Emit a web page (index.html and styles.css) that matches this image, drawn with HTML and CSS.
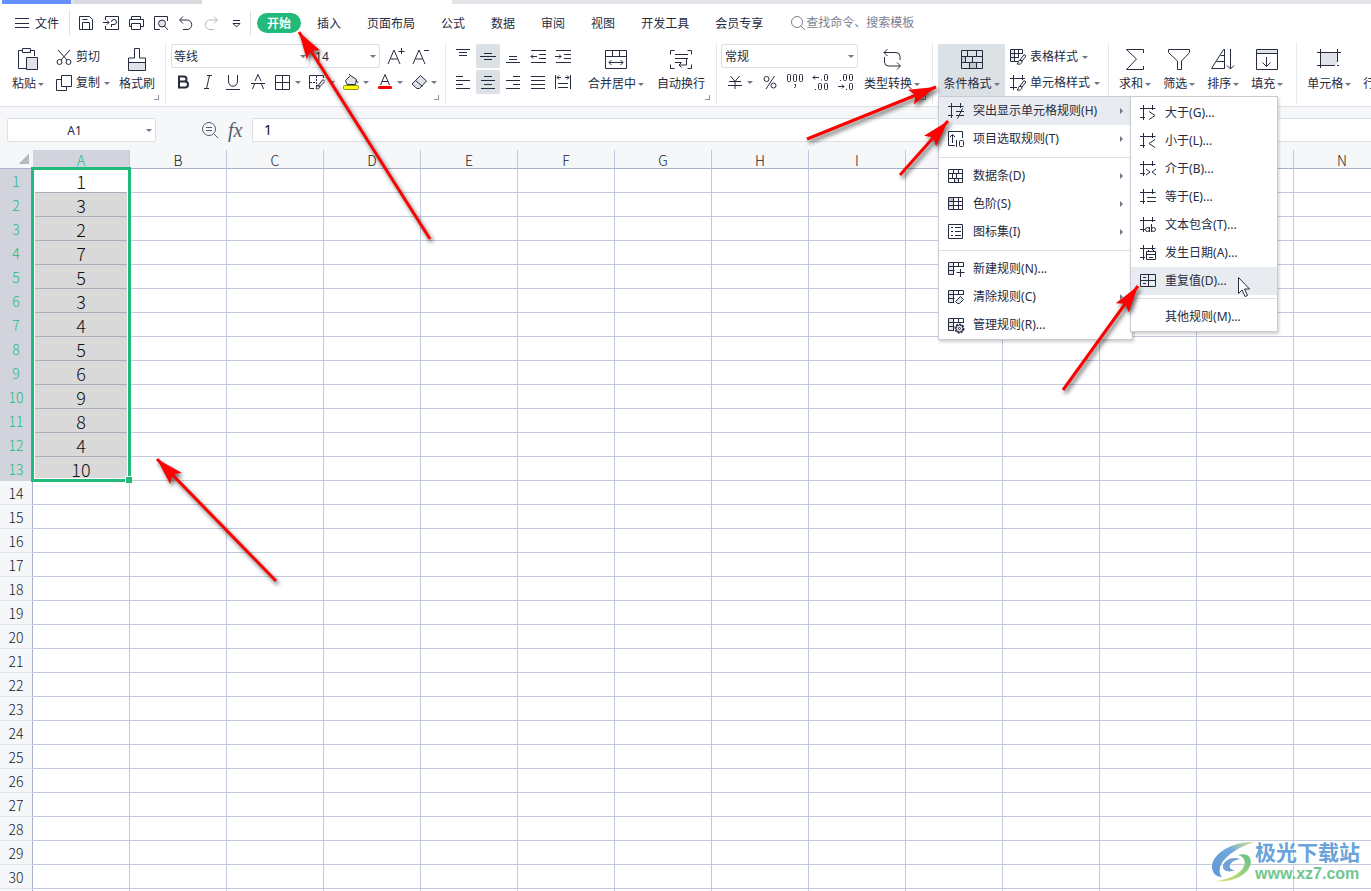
FILE: index.html
```html
<!DOCTYPE html>
<html lang="zh-CN">
<head>
<meta charset="utf-8">
<title>表格</title>
<link rel="stylesheet" href="styles.css">
</head>
<body>
<svg class="defs" aria-hidden="true">
  <symbol id="frame" viewBox="0 0 18 18"><path d="M1 4.500h15.500M4.500 1v15M1 13.500h5M13.500 1v5"/></symbol>
  <symbol id="table" viewBox="0 0 18 18"><path class="tint" d="M2 2h4v13H2z"/><path d="M7 14.500H1.500v-12h15V7M1.500 6.500h15M1.500 10.500h6M6.500 2.500v12M11.500 2.500v4"/></symbol>
</svg>
<div class="app">
  <div class="docs"><span class="doc home"></span><span class="doc other"></span><span class="doc current"></span><span class="doc rest"></span></div>

  <header class="menubar">
    <button class="file"><svg width="16" height="16"><path d="M1 2.500h14M1 7.500h14M1 11.500h14"/></svg>文件</button>
    <div class="quick">
      <button aria-label="保存"><svg width="16" height="16"><path d="M1.500 1.500h10l3 3v10h-13zM4.500 14v-6.500h7V14M4.500 4.500h5"/></svg></button>
      <button aria-label="输出为PDF"><svg width="16" height="16"><path d="M2.500 5V1.500h13v13h-13V11M0 7.500h6M4 5.500l2 2-2 2M8.500 12V9.500M8 9.500h3a2.500 2.500 0 1 0-2.500-2.500"/></svg></button>
      <button aria-label="打印"><svg width="16" height="16"><path d="M3.500 4.500v-3h9v3M3.500 11.500h-2v-7h14v7h-3M3.500 8.500h9v6h-9z"/></svg></button>
      <button aria-label="打印预览"><svg width="16" height="16"><path d="M7 14.500H1.500v-13h13V6"/><circle class="tint line" cx="9" cy="8.500" r="3.500"/><path d="M11.500 11l3.500 4"/></svg></button>
      <button aria-label="撤销"><svg width="16" height="16"><path d="M5 1.500l-3.500 3.500 3.500 3.500M2 5h7a4.500 4.500 0 0 1 0 9.500H5"/></svg></button>
      <button aria-label="恢复" class="off"><svg width="16" height="16"><path d="M11 1.500l3.500 3.500-3.500 3.500M14 5H7a4.500 4.500 0 0 0 0 9.500h4"/></svg></button>
      <button aria-label="自定义"><svg width="16" height="16"><path d="M5 5.500h7M5 8.500l3.500 3.500 3.500-3.500z"/></svg></button>
    </div>
    <nav class="tabs">
      <button class="tab on">开始</button><button class="tab">插入</button><button class="tab">页面布局</button><button class="tab">公式</button><button class="tab">数据</button><button class="tab">审阅</button><button class="tab">视图</button><button class="tab">开发工具</button><button class="tab">会员专享</button>
    </nav>
    <label class="search"><svg width="16" height="16"><circle cx="7" cy="7" r="5.500"/><path d="M11 11l4 4"/></svg><input type="text" placeholder="查找命令、搜索模板" aria-label="搜索"></label>
  </header>

  <section class="ribbon">
    <div class="group clip">
      <button class="big"><svg width="22" height="24"><path d="M9 21.500H1.500v-18h4M14 3.500h3.500V9M5.500 1.500h8v4h-8z"/><path class="tint line" d="M9.500 10.500h11v12h-11z"/></svg><span class="label drop">粘贴</span></button>
      <div class="rows">
        <button class="item"><svg width="16" height="16"><path d="M2 1l9 10M14 1L5 11"/><circle cx="3.500" cy="13" r="2.500"/><circle cx="12.500" cy="13" r="2.500"/></svg>剪切</button>
        <button class="item drop"><svg width="16" height="16"><path d="M5.500.500h10v11h-10zM5.500 4.500h-5v11h10v-4"/></svg>复制</button>
      </div>
      <button class="big"><svg width="20" height="24"><path class="tint" d="M2 16h16v7H2z"/><path d="M7.500 11V1.500h5V11h6v12.500h-17V11zM1.500 15.500h17"/></svg><span class="label">格式刷</span></button>
      <span class="more"></span>
    </div>

    <div class="group font">
      <div class="rows">
        <div class="row">
          <span class="combo family"><select aria-label="字体"><option>等线</option></select></span><span class="combo size"><select aria-label="字号"><option>14</option></select></span>
          <button class="sq grow" aria-label="增大字号"><svg width="18" height="18"><path d="M1 17L7 3l6 14M3.500 12h7M14.500 1v6M11.500 4.500h6"/></svg></button>
          <button class="sq" aria-label="减小字号"><svg width="18" height="18"><path d="M1 17L7 3l6 14M3.500 12h7M12 3.500h5"/></svg></button>
        </div>
        <div class="row">
          <button class="sq" aria-label="加粗"><svg width="16" height="16"><path class="heavy" d="M3 2.500h5a2.500 2.500 0 0 1 0 5H3zM3 7.500h6a3 3 0 0 1 0 6H3z"/></svg></button>
          <button class="sq" aria-label="倾斜"><svg width="16" height="16"><path d="M6 1.500h5M3 14.500h5M8.500 1.500l-3 13"/></svg></button>
          <button class="sq" aria-label="下划线"><svg width="16" height="16"><path d="M2.500 1v6c0 7 9 7 9 0V1M0 15.500h14"/></svg></button>
          <button class="sq" aria-label="删除线"><svg width="16" height="16"><path d="M1.500 15l2-5M10.500 10l2 5M4 7L7 .500 10 7M0 9.500h14"/></svg></button>
          <button class="ic drop" aria-label="边框"><svg width="16" height="16"><path d="M.500 1.500h14v14H.500zM7.500 1.500v14M.500 8.500h14"/></svg></button>
          <button class="ic drop" aria-label="绘制边框"><svg width="16" height="16"><path d="M5 14.500H.500v-13h14V4"/><path class="dots" d="M1 8.500h7M7.500 2v12"/><path class="tint line" d="M14 5.500l2 2-5 5-2-1zM9 11.500l2 1c0 2-2 3-4 2 1-1 0-3 2-3z"/></svg></button>
          <button class="ic drop" aria-label="填充颜色"><svg width="16" height="16"><path class="tint line" d="M2.500 6.500l5-5 6 4-1 5H4z"/><path d="M7.500 1.500L6 0M13 6l2 3"/><rect class="yellow" x=".500" y="11.500" width="15" height="4" rx="1"/></svg></button>
          <button class="ic drop" aria-label="字体颜色"><svg width="16" height="16"><path d="M3.500 11L8 .500 12.500 11M5 7.500h6"/><rect class="red" x="1" y="12" width="14" height="3" rx="1"/></svg></button>
          <button class="ic drop" aria-label="清除"><svg width="16" height="16"><path class="tint line" d="M9.500 1.500l6 5.500-7 7.500L6 14.500 1 10z"/><path d="M4.500 6.500l7 6"/></svg></button>
        </div>
      </div>
      <span class="more"></span>
    </div>

    <div class="group align">
      <div class="grid">
        <button class="sq" aria-label="顶端对齐"><svg width="16" height="16"><path d="M1 1.500h14M4 4.500h8M4 7.500h8"/></svg></button>
        <button class="sq on" aria-label="垂直居中"><svg width="16" height="16"><path d="M4 5.500h8M0 8.500h16M4 11.500h8"/></svg></button>
        <button class="sq" aria-label="底端对齐"><svg width="16" height="16"><path d="M4 8.500h8M4 11.500h8M1 14.500h14"/></svg></button>
        <button class="sq" aria-label="减少缩进"><svg width="16" height="16"><path d="M1 2.500h15M9 6.500h7M9 10.500h7M1 14.500h15M7 8.500H1M3 6.500l-2 2 2 2"/></svg></button>
        <button class="sq" aria-label="增加缩进"><svg width="16" height="16"><path d="M1 2.500h15M9 6.500h7M9 10.500h7M1 14.500h15M0 8.500h6M4 6.500l2 2-2 2"/></svg></button>
        <button class="sq" aria-label="左对齐"><svg width="16" height="16"><path d="M1 2.500h7M1 6.500h14M1 10.500h7M1 14.500h14"/></svg></button>
        <button class="sq on" aria-label="水平居中"><svg width="16" height="16"><path d="M4 2.500h8M1 6.500h14M4 10.500h8M1 14.500h14"/></svg></button>
        <button class="sq" aria-label="右对齐"><svg width="16" height="16"><path d="M8 2.500h7M1 6.500h14M8 10.500h7M1 14.500h14"/></svg></button>
        <button class="sq" aria-label="两端对齐"><svg width="16" height="16"><path d="M1 2.500h14M1 6.500h14M1 10.500h14M1 14.500h14"/></svg></button>
        <button class="sq" aria-label="分散对齐"><svg width="16" height="16"><path d="M.500 1v14M15.500 1v14M2 3.500h4M10 3.500h4M4 1.500l-2 2 2 2M12 1.500l2 2-2 2M3 9.500h10M3 13.500h10"/></svg></button>
      </div>
      <button class="big"><svg width="22" height="24"><path d="M.500 3.500h21v18H.500zM.500 9.500h21M7.500 3.500v6M14.500 3.500v6M4 15.500h14M6.500 13L4 15.500 6.500 18M15.500 13l2.500 2.500-2.500 2.500"/></svg><span class="label drop">合并居中</span></button>
      <button class="big"><svg width="22" height="24"><path d="M.500 7.500v-4h4M17.500 3.500h4v4M.500 17.500v4h4M17.500 21.500h4v-4M5 7.500h13M5 11.500h13M5 15.500h6M16.500 12v6H9M11.500 15.500L9 18l2.500 2.500"/></svg><span class="label">自动换行</span></button>
      <span class="more"></span>
    </div>

    <div class="group number">
      <div class="rows">
        <span class="combo format"><select aria-label="数字格式"><option>常规</option></select></span>
        <div class="row digits">
          <button class="ic drop" aria-label="货币"><svg width="16" height="16"><path d="M3.500 2L8 7.500 12.500 2M2 7.500h12M1 11.500h14M8 7.500V15"/></svg></button>
          <button class="sq" aria-label="百分比"><svg width="16" height="16"><circle cx="4.500" cy="5" r="2.500"/><circle cx="11.500" cy="11.500" r="2.500"/><path d="M12.500 2L4 15"/></svg></button>
          <button class="sq" aria-label="千位分隔"><svg width="18" height="18"><rect x="1.500" y="1.500" width="3" height="7" rx="1"/><rect x="7.500" y="1.500" width="3" height="7" rx="1"/><rect x="13.500" y="1.500" width="3" height="7" rx="1"/><path d="M8.500 11.500h1v2l-1 1.500"/></svg></button>
          <button class="sq" aria-label="增加小数位"><svg width="18" height="18"><path d="M2 4.500h6M4 2.500l-2 2 2 2M10.500 6.500v1M4.500 16v1"/><rect x="13.500" y="1.500" width="3" height="6" rx="1"/><rect x="7.500" y="10.500" width="3" height="6" rx="1"/><rect x="13.500" y="10.500" width="3" height="6" rx="1"/></svg></button>
          <button class="sq" aria-label="减少小数位"><svg width="18" height="18"><path d="M2 13.500h6M6 11.500l2 2-2 2M4.500 7v1M10.500 16v1"/><rect x="7.500" y="1.500" width="3" height="6" rx="1"/><rect x="13.500" y="1.500" width="3" height="6" rx="1"/><rect x="13.500" y="10.500" width="3" height="6" rx="1"/></svg></button>
        </div>
      </div>
      <button class="big"><svg width="20" height="24"><path d="M5.500 2L2 5.500 5.500 9M2 5.500h12q4 0 4 4V13M2.500 10v5q0 4 4 4H18M15 15.500l3.500 3.500-3.500 3.500"/></svg><span class="label drop">类型转换</span></button>
      <span class="more"></span>
    </div>

    <div class="group style">
      <div class="anchor">
        <button class="big on"><svg width="22" height="24"><path class="shade" d="M1 10h4v5H1zM8 16h7v5H8z"/><path d="M.500 3.500h21v18H.500zM.500 9.500h21M.500 15.500h21M6.500 3.500v6M15.500 3.500v6M4.500 9.500v6M11.500 9.500v6M8.500 15.500v6M15.500 15.500v6"/></svg><span class="label drop">条件格式</span></button>
        <ul class="menu main">
          <li class="parent"><button class="entry sub on"><svg width="18" height="18"><use href="#frame"/><path d="M9 9.500h8M9 13.500h8M15.500 6.500l-5 10"/></svg>突出显示单元格规则(H)</button>
            <ul class="menu side">
              <li><button class="entry"><svg width="18" height="18"><use href="#frame"/><path d="M10 7.500l6 4-6 4"/></svg>大于(G)...</button></li>
              <li><button class="entry"><svg width="18" height="18"><use href="#frame"/><path d="M16 7.500l-6 4 6 4"/></svg>小于(L)...</button></li>
              <li><button class="entry"><svg width="18" height="18"><use href="#frame"/><path d="M7 9l4 3-4 3M17 9l-4 3 4 3"/></svg>介于(B)...</button></li>
              <li><button class="entry"><svg width="18" height="18"><use href="#frame"/><path d="M8 9.500h9M8 13.500h9"/></svg>等于(E)...</button></li>
              <li><button class="entry"><svg width="18" height="18"><use href="#frame"/><circle cx="8.500" cy="13.500" r="2"/><path d="M10.500 11v5M12.500 8v8"/><circle cx="14.500" cy="13.500" r="2"/></svg>文本包含(T)...</button></li>
              <li><button class="entry"><svg width="18" height="18"><use href="#frame"/><path class="line paper" d="M7.500 7.500h9v8h-9zM7.500 10.500h9M9.500 6v2M14.500 6v2M10 13.500h4"/></svg>发生日期(A)...</button></li>
              <li><button class="entry on"><svg width="18" height="18"><path d="M1.500 2.500h15v12h-15zM9.500 2.500v12M1.500 8.500h15M4 5.500h3M4 11.500h3"/></svg>重复值(D)...</button></li>
              <li class="sep"></li>
              <li><button class="entry"><svg width="18" height="18"></svg>其他规则(M)...</button></li>
            </ul>
          </li>
          <li><button class="entry sub"><svg width="18" height="18"><path d="M8 15.500H1.500v-14h14V8M5.500 13V5M3 7l2.500-2.500L8 7M9.500 10v7"/><rect x="12.500" y="10.500" width="4" height="6" rx="1"/></svg>项目选取规则(T)</button></li>
          <li class="sep"></li>
          <li><button class="entry sub"><svg width="18" height="18"><path class="tint" d="M8 11h4v4H8z"/><path d="M1.500 2.500h14v13h-14zM1.500 6.500h14M1.500 11.500h14M6.500 2.500v4M11.500 2.500v4M5.500 6.500v5M9.500 6.500v5M7.500 11.500v4M11.500 11.500v4"/></svg>数据条(D)</button></li>
          <li><button class="entry sub"><svg width="18" height="18"><path class="shade" d="M2 3h4v4H2z"/><path class="tint" d="M2 7h4v8H2z"/><path d="M1.500 2.500h14v12h-14zM1.500 6.500h14M1.500 10.500h14M6.500 2.500v12M11.500 2.500v12"/></svg>色阶(S)</button></li>
          <li><button class="entry sub"><svg width="18" height="18"><path d="M1.500 1.500h14v14h-14zM4 4.500h2M4 8.500h2M4 12.500h2M8 4.500h6M8 8.500h6M8 12.500h6"/></svg>图标集(I)</button></li>
          <li class="sep"></li>
          <li><button class="entry"><svg width="18" height="18"><use href="#table"/><path d="M13.500 9v8M9.500 12.500h8"/></svg>新建规则(N)...</button></li>
          <li><button class="entry sub"><svg width="18" height="18"><use href="#table"/><path class="tint line" d="M13.500 8.500l3 3-4 4h-2l-2-2z"/></svg>清除规则(C)</button></li>
          <li><button class="entry"><svg width="18" height="18"><use href="#table"/><circle class="cog" cx="12.500" cy="12.500" r="4"/><circle class="tint line" cx="12.500" cy="12.500" r="3.500"/><circle class="paper line" cx="12.500" cy="12.500" r="1"/></svg>管理规则(R)...</button></li>
        </ul>
      </div>
      <div class="rows">
        <button class="item drop"><svg width="16" height="16"><path class="tint" d="M1 1h4v10H1z"/><path d="M8 12.500H.500V.500h12V5M.500 4.500h12M.500 8.500H9M4.500.500v12M8.500.500v8"/><path class="line paper" d="M14 5.500l2 1.500-4 5-2-1zM10 11l2 1c0 3-2 3.500-5 3 2-1 1-4 3-4z"/></svg>表格样式</button>
        <button class="item drop"><svg width="16" height="16"><path d="M0 3.500h15M3.500 0v15M0 12.500h7M12.500 0v5"/><path class="line paper" d="M14 5.500l2 1.500-4 5-2-1zM10 11l2 1c0 3-2 3.500-5 3 2-1 1-4 3-4z"/></svg>单元格样式</button>
      </div>
    </div>

    <div class="group edit">
      <button class="big"><svg width="20" height="24"><path d="M18.500 6V2.500h-17l10 9.500-10 10.500h17V19"/></svg><span class="label drop">求和</span></button>
      <button class="big"><svg width="22" height="24"><path d="M.500 2.500h21v3L13.500 14v8.500h-4V14L.500 5.500z"/></svg><span class="label drop">筛选</span></button>
      <button class="big"><svg width="24" height="24"><path d="M13.500 21.500H.500l12-19h1zM9.500 8.500h4M5.500 14.500h8M13.500 2.500v19M19.500 2v20M16 18.500l3.500 3.500 3.500-3.500"/></svg><span class="label drop">排序</span></button>
      <button class="big"><svg width="22" height="24"><path class="tint" d="M1 2h20v5H1z"/><path d="M.500 2.500h21v20H.500zM.500 6.500h21M10.500 10v9M6.500 15.500l4 4 4-4"/></svg><span class="label drop">填充</span></button>
    </div>

    <div class="group cells">
      <button class="big"><svg width="24" height="24"><path class="tint" d="M4 6h16v12H4z"/><path d="M0 5.500h24M3.500 2v19M0 18.500h18M20.500 2v13M20 18.500h2"/></svg><span class="label drop">单元格</span></button>
      <button class="big"><svg width="20" height="24"></svg><span class="label drop">行和列</span></button>
    </div>
  </section>

  <div class="formula">
    <span class="combo namebox"><input type="text" value="A1" aria-label="名称框"></span>
    <button class="lens" aria-label="查找"><svg width="18" height="18"><circle cx="8" cy="8" r="6.500"/><path d="M13 13l4 4M5 6.500h6M5 9.500h6"/></svg></button>
    <button class="fx" aria-label="插入函数">fx</button>
    <input class="value" type="text" value="1" aria-label="编辑栏">
  </div>

  <main class="sheet">
    <div class="selection"></div>
    <table>
      <thead><tr><th class="corner"></th><th class="sel">A</th><th>B</th><th>C</th><th>D</th><th>E</th><th>F</th><th>G</th><th>H</th><th>I</th><th>J</th><th>K</th><th>L</th><th>M</th><th>N</th></tr></thead>
      <tbody class="picked">
        <tr><th>1</th><td class="active">1<td><td><td><td><td><td><td><td><td><td><td><td><td></tr>
        <tr><th>2</th><td>3<td><td><td><td><td><td><td><td><td><td><td><td><td></tr>
        <tr><th>3</th><td>2<td><td><td><td><td><td><td><td><td><td><td><td><td></tr>
        <tr><th>4</th><td>7<td><td><td><td><td><td><td><td><td><td><td><td><td></tr>
        <tr><th>5</th><td>5<td><td><td><td><td><td><td><td><td><td><td><td><td></tr>
        <tr><th>6</th><td>3<td><td><td><td><td><td><td><td><td><td><td><td><td></tr>
        <tr><th>7</th><td>4<td><td><td><td><td><td><td><td><td><td><td><td><td></tr>
        <tr><th>8</th><td>5<td><td><td><td><td><td><td><td><td><td><td><td><td></tr>
        <tr><th>9</th><td>6<td><td><td><td><td><td><td><td><td><td><td><td><td></tr>
        <tr><th>10</th><td>9<td><td><td><td><td><td><td><td><td><td><td><td><td></tr>
        <tr><th>11</th><td>8<td><td><td><td><td><td><td><td><td><td><td><td><td></tr>
        <tr><th>12</th><td>4<td><td><td><td><td><td><td><td><td><td><td><td><td></tr>
        <tr><th>13</th><td>10<td><td><td><td><td><td><td><td><td><td><td><td><td></tr>
      </tbody>
      <tbody>
        <tr><th>14</th><td><td><td><td><td><td><td><td><td><td><td><td><td><td></tr>
        <tr><th>15</th><td><td><td><td><td><td><td><td><td><td><td><td><td><td></tr>
        <tr><th>16</th><td><td><td><td><td><td><td><td><td><td><td><td><td><td></tr>
        <tr><th>17</th><td><td><td><td><td><td><td><td><td><td><td><td><td><td></tr>
        <tr><th>18</th><td><td><td><td><td><td><td><td><td><td><td><td><td><td></tr>
        <tr><th>19</th><td><td><td><td><td><td><td><td><td><td><td><td><td><td></tr>
        <tr><th>20</th><td><td><td><td><td><td><td><td><td><td><td><td><td><td></tr>
        <tr><th>21</th><td><td><td><td><td><td><td><td><td><td><td><td><td><td></tr>
        <tr><th>22</th><td><td><td><td><td><td><td><td><td><td><td><td><td><td></tr>
        <tr><th>23</th><td><td><td><td><td><td><td><td><td><td><td><td><td><td></tr>
        <tr><th>24</th><td><td><td><td><td><td><td><td><td><td><td><td><td><td></tr>
        <tr><th>25</th><td><td><td><td><td><td><td><td><td><td><td><td><td><td></tr>
        <tr><th>26</th><td><td><td><td><td><td><td><td><td><td><td><td><td><td></tr>
        <tr><th>27</th><td><td><td><td><td><td><td><td><td><td><td><td><td><td></tr>
        <tr><th>28</th><td><td><td><td><td><td><td><td><td><td><td><td><td><td></tr>
        <tr><th>29</th><td><td><td><td><td><td><td><td><td><td><td><td><td><td></tr>
        <tr><th>30</th><td><td><td><td><td><td><td><td><td><td><td><td><td><td></tr>
        <tr><th></th><td><td><td><td><td><td><td><td><td><td><td><td><td><td></tr>
      </tbody>
    </table>
  </main>

  <div class="brand">
    <svg width="44" height="42" viewBox="0 0 44 42">
      <defs>
        <linearGradient id="sky" x1="0" y1="1" x2="1" y2="0"><stop offset="0" stop-color="#5f97d3"/><stop offset=".6" stop-color="#6fa9dc"/><stop offset="1" stop-color="#dce88a"/></linearGradient>
        <linearGradient id="leaf" x1="0" y1="1" x2="1" y2="0"><stop offset="0" stop-color="#dfe56c"/><stop offset="1" stop-color="#5fc088"/></linearGradient>
      </defs>
      <path fill="url(#sky)" d="M43 1C24 0 2 11 1 25c0 7 4 11 10 11-4-4-3-12 3-18C21 10 32 5 43 1z"/>
      <path fill="url(#leaf)" d="M27 14c10-3 15 3 12 11-4 10-19 17-35 15 13-1 26-7 29-15 2-5 0-9-6-11z"/>
      <path fill="#6fa3d8" d="M29 18c-7-3-16 1-17 7-1 5 6 7 12 4-4 0-6-2-5-5 1-3 5-5 10-6z"/>
    </svg>
    <div><div class="brand-name">极光下载站</div><div class="brand-url">www.xz7.com</div></div>
  </div>

  <svg class="arrows" aria-hidden="true">
    <defs><marker id="tip" markerUnits="userSpaceOnUse" markerWidth="28" markerHeight="18" refX="27" refY="9" orient="auto"><path d="M27 9L0 1l5 8-5 8z"/></marker></defs>
    <path d="M430 239L299 32"/>
    <path d="M807 139L936 87"/>
    <path d="M900 175L948 121"/>
    <path d="M1063 390L1138 286"/>
    <path d="M276 581L157 459"/>
  </svg>
  <svg class="cursor" width="14" height="22" aria-hidden="true"><path d="M1.500 1.500v16l3.500-3.500 3 6.500 2.500-1-3-6.500h5z"/></svg>
</div>
</body>
</html>
```
FILE: styles.css
```css
:root {
  --ink: #262b3f;
  --green: #21ba7b;
  --grid: #c3c9dc;
  --pane: #f5f7f9;
  --edge: #dcdfe5;
  --hover: #dce1e6;
}
* { box-sizing: border-box; }
body {
  margin: 0;
  font: 12px/24px "Noto Sans", "Noto Sans CJK SC", sans-serif;
  color: var(--ink);
}
button, input, select { font: inherit; color: inherit; border: 0; padding: 0; margin: 0; background: none; }
button { display: flex; align-items: center; white-space: nowrap; }
ul { list-style: none; margin: 0; padding: 0; }
svg { flex: none; fill: none; stroke: var(--ink); stroke-width: 1px; }
.defs { position: absolute; width: 0; height: 0; }
.tint { fill: #e0e3e8; stroke: none; }
.shade { fill: #b7bcc8; stroke: none; }
.big .shade { fill: #c4c9d1; }
.line { stroke: var(--ink); }
.paper { fill: #fff; }
.heavy { stroke-width: 2px; }
.dots { stroke-dasharray: 2 1; }
.cog { stroke-dasharray: 2 1; stroke-width: 2px; }
.yellow { fill: #ff0; stroke: #8f8f20; }
.red { fill: #f00; stroke: none; }

.app { position: relative; height: 100vh; overflow: hidden; display: flex; flex-direction: column; background: #fff; }

.docs { display: flex; height: 4px; padding-left: 2px; flex: none; }
.home { width: 69px; background: #6690ff; }
.other { width: 131px; background: #d8dae0; border-left: 3px solid #e2e3e7; }
.current { width: 250px; }
.rest { flex: 1; background: #e2e4e8; }

.menubar { display: flex; align-items: center; height: 38px; flex: none; }
.file { gap: 5px; padding: 2px 10px 0 14px; border-right: 1px solid var(--edge); }
.quick { display: flex; gap: 9px; padding: 0 6px 0 8px; margin-right: 3px; border-right: 1px solid var(--edge); height: 24px; }
.off svg { stroke: #b4b7be; }
.tabs { display: flex; align-items: center; }
.tab { padding: 2px 13px 0; height: 20px; line-height: 18px; }
.tab.on { padding: 2px 10px 0; margin: 0 3px; border-radius: 10px; background: var(--green); color: #fff; font-weight: 700; }
.search { display: flex; align-items: center; margin-left: 14px; flex: 1; }
.search svg { stroke: #7b8193; }
.search input { flex: 1; height: 24px; }
.search input::placeholder { color: #7b8193; opacity: 1; }

.ribbon { display: flex; height: 65px; flex: none; border-bottom: 1px solid #dfe2e6; background: #fff; }
.group { position: relative; display: flex; flex: none; padding-top: 2px; border-right: 1px solid #e8eaee; height: 62px; }
.rows { display: flex; flex-direction: column; gap: 2px; }
.row { display: flex; height: 24px; }
.big { flex-direction: column; justify-content: flex-start; height: 52px; padding-top: 3px; }
.label { height: 24px; display: flex; align-items: center; padding-top: 2px; }
.item { height: 24px; gap: 4px; padding-top: 2px; }
.sq { width: 24px; height: 24px; justify-content: center; border-radius: 2px; }
.ic { width: 34px; height: 24px; padding-left: 4px; }
.on { background: var(--hover); }
.drop::after, .combo::after {
  content: ""; flex: none; border: 3px solid transparent; border-top-color: #6f7689; border-bottom: 0; margin-left: 2px;
}
.item.drop::after { margin-left: 0; }
.ic.drop::after { margin-left: 4px; }
.more { position: absolute; right: 6px; bottom: 4px; width: 5px; height: 5px; border: solid #8a90a0; border-width: 0 1px 1px 0; }

.combo { position: relative; display: flex; align-items: center; height: 24px; border: 1px solid var(--edge); border-radius: 2px; background: #fff; }
.combo::after { position: absolute; right: 3px; }
.combo select, .combo input { appearance: none; width: 100%; height: 22px; padding-left: 2px; outline: 0; }
.family { width: 139px; }
.size { width: 70px; border-left: 0; }
.size select { padding-left: 5px; }
.format { width: 137px; }
.format select { padding-left: 3px; }

.clip { padding-left: 12px; }
.clip .rows { margin: 0 9px 0 12px; }
.clip .big:last-of-type { margin-right: 10px; }
.font { padding-left: 5px; }
.font .sq { width: 25px; }
.font .grow { margin-left: 3px; }
.font .rows { width: 274px; }
.align { padding: 2px 11px 0 5px; }
.grid { display: grid; grid-template-columns: repeat(5, 24px); gap: 2px 1px; align-content: start; }
.align .big { margin-left: 13px; }
.number { padding: 2px 12px 0 4px; }
.digits { padding-left: 2px; }
.digits .sq { width: 25px; }
.number .big { margin-left: 6px; }
.style { padding: 2px 8px 0 5px; gap: 5px; }
.style .big { width: 67px; }
.edit { gap: 12px; padding: 2px 13px 0 10px; }
.cells { gap: 12px; padding-left: 10px; }

.anchor { position: relative; }
.menu { position: absolute; z-index: 5; background: #fff; border: 1px solid #c9ccd2; box-shadow: 1px 2px 3px rgba(0, 0, 0, .2); }
.main { top: 52px; left: 0; width: 195px; }
.side { top: -1px; left: 191px; width: 148px; padding-top: 2px; }
.parent { position: relative; }
.entry { position: relative; width: 100%; height: 28px; padding-left: 8px; gap: 8px; }
.entry.on { background: #e8ebf0; }
.sub::after { content: ""; position: absolute; right: 9px; border: 3px solid transparent; border-left-color: #6f7689; border-right: 0; }
.sep { height: 1px; margin: 4px 0; background: #dfe1e8; }
.side .sep { margin: 3px 0 4px; }

.formula { display: flex; align-items: center; height: 43px; flex: none; padding: 3px 0 0 7px; background: var(--pane); }
.namebox { width: 149px; }
.namebox input { text-align: center; padding: 2px 16px 0 2px; }
.lens { margin-left: 45px; }
.lens svg { stroke: #555b70; }
.fx { margin-left: 9px; width: 24px; font: italic 20px/24px "Liberation Serif", serif; color: #555b70; }
.value { flex: 1; height: 24px; padding-left: 11px; border: 1px solid var(--edge); border-right: 0; border-radius: 2px 0 0 2px; background: #fff; font-size: 14px; color: #111; outline: 0; }

.sheet { position: relative; flex: 1; overflow: hidden; font-family: "Noto Sans CJK SC", sans-serif; font-weight: 300; }
table { table-layout: fixed; width: 1391px; border-collapse: separate; border-spacing: 0; }
th, td { padding: 0; width: 97px; height: 24px; border: solid var(--grid); border-width: 0 1px 1px 0; text-align: center; }
th { background: var(--pane); font-size: 14px; font-weight: 300; line-height: 18px; color: #161a26; }
thead th { height: 19px; padding-top: 2px; line-height: 16px; border-bottom-color: #a9b2cc; }
tbody th { border-right-color: #a9b2cc; border-bottom-color: #e3e6ee; }
.corner { width: 33px; background: linear-gradient(135deg, transparent 50%, #b9bbc0 50%) 19px 4px / 10px 10px no-repeat var(--pane); border-right-color: transparent; }
td { padding-top: 2px; font-size: 18px; line-height: 21px; color: #111; }
.sel, .picked th { background: #d1d4dd; color: var(--green); }
.picked th { border-bottom-color: #d1d4dd; }
.picked td:nth-child(2) { background: #d9d9d9; border-bottom-color: #a9adb9; }
.picked td.active:nth-child(2) { background: #fff; }
.selection { position: absolute; top: 17px; left: 31px; width: 100px; height: 315px; border: 3px solid var(--green); box-shadow: inset 0 0 0 1px #fff; }
.selection::after { content: ""; position: absolute; right: -4px; bottom: -4px; width: 6px; height: 6px; background: var(--green); border: solid #fff; border-width: 1px 0 0 1px; }

.brand { position: absolute; right: 11px; bottom: 8px; display: flex; align-items: flex-end; }
.brand svg { stroke: none; }
.brand-name { font: 700 21px/28px "Noto Sans CJK SC", sans-serif; color: #69a3da; }
.brand-url { font: 700 16px/18px "Liberation Sans", sans-serif; color: #70c78e; }

.arrows { position: absolute; inset: 0; width: 100%; height: 100%; z-index: 9; pointer-events: none; filter: drop-shadow(2px 3px 2px rgba(0, 0, 0, .6)); }
.arrows > path { stroke: #f00; stroke-width: 3px; marker-end: url(#tip); }
.arrows marker path { fill: #f00; stroke: none; }
.cursor { position: absolute; left: 1237px; top: 276px; z-index: 10; fill: #fff; }
```
